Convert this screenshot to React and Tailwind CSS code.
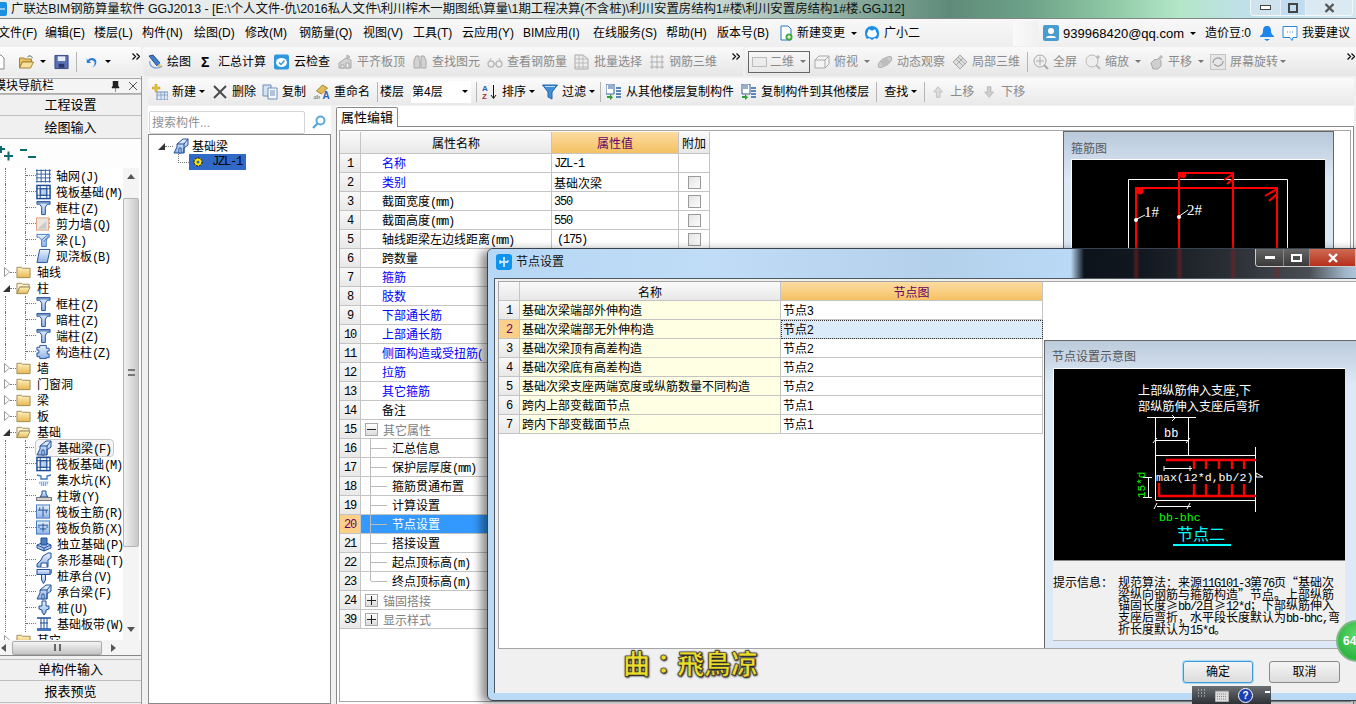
import React from 'react';

const S = ({ c = '', children, v = '0 0 16 16' }) => (
  <svg viewBox={v} className={`w-4 h-4 shrink-0 block ${c}`}>{children}</svg>
);
const Mono = ({ children, c = '' }) => (
  <span className={`font-['Liberation_Mono','Noto_Sans_CJK_SC',monospace] text-[12px] tracking-[-1.2px] ${c}`}>{children}</span>
);
const Cr = ({ c = '', g }) => (
  <span className={`w-0 h-0 shrink-0 border-x-[3px] border-x-transparent border-t-[3px] ${g ? 'border-t-[#777]' : 'border-t-black'} ${c}`} />
);
const Sep = ({ c = '' }) => <span className={`w-px h-[20px] bg-[#b5b5b5] shrink-0 ${c}`} />;
const Tb = ({ ic, t, c = '', g }) => (
  <div className={`flex items-center shrink-0 ${c} ${g ? 'text-[#8a8a8a]' : 'text-black'}`}>
    {ic}
    <span className="ml-1">{t}</span>
  </div>
);
const Chev = ({ c = '' }) => (
  <svg viewBox="0 0 8 7" className={`w-2 h-[7px] shrink-0 ${c}`}>
    <path d="M0.5 0.5l3 3-3 3M4.5 0.5l3 3-3 3" fill="none" stroke="#111" strokeWidth="1.3" />
  </svg>
);

/* toolbar icons */
const INew = () => <S><path d="M3 1h7l3 3v11H3z" fill="#fff" stroke="#888" /></S>;
const IOpen = () => <S c="w-[17px]"><path d="M1 4h5l1 1h6v3H4L1 14z" fill="#e9c060" stroke="#a5813a" /><path d="M4 8h11l-3 6H1z" fill="#f7e19b" stroke="#a5813a" /><path d="M9 3c2-2 4-1 5 1" fill="none" stroke="#3c7a3c" /></S>;
const ISave = () => <S c="w-[15px]"><path d="M1 1h14v14H1z" fill="#5a6fb5" stroke="#34467f" /><path d="M4 2h8v5H4z" fill="#e7ecf8" /><path d="M5 10h6v4H5z" fill="#2a3768" /></S>;
const IUndo = () => <S c="w-[14px]"><path d="M3 6c3-4 10-3 10 2 0 3-2 5-4 6 1-2 2-3 2-5 0-3-4-4-6-2l2 2H2V3z" fill="#2e7dd6" /></S>;
const IDraw = () => <S><path d="M2 2l4-1 7 8-3 3z" fill="#3f7fc8" stroke="#27508a" /><path d="M3 7c-1 3 1 6 5 7 3 0 6-1 7-2" fill="none" stroke="#7aa7d8" strokeWidth="1.4" /><path d="M10 12l3-3 1 4z" fill="#e6c25a" /></S>;
const ICloud = () => <S c="w-[17px]"><rect x="0.5" y="0.5" width="15" height="15" rx="2" fill="#2f97de" /><ellipse cx="8" cy="8.5" rx="5.5" ry="4.5" fill="#fff" /><path d="M5.5 8.5l2 2 3.5-4" fill="none" stroke="#2f97de" strokeWidth="1.4" /></S>;
const G = ({ d, f = '#d3d3d3', s = '#a9a9a9' }) => <path d={d} fill={f} stroke={s} />;
const IAlign = () => <S><G d="M2 9l7-5 5 2v8H2z" /><G d="M4 11h3v3H4zM9 9h3v5H9z" f="#eee" /><G d="M10 1l3 2-3 2z" /></S>;
const IBino = () => <S><G d="M2 6l2-4h3v4l1 1v7H2zM9 2h3l2 4v8H9V7z" /></S>;
const IGlass = () => <S><circle cx="4" cy="10" r="3" fill="none" stroke="#bbb" strokeWidth="1.4" /><circle cx="12" cy="10" r="3" fill="none" stroke="#bbb" strokeWidth="1.4" /><path d="M7 10h2M2 8l2-4M14 8l-2-4" stroke="#bbb" fill="none" /></S>;
const IBatch = () => <S><G d="M1 1h8l5 4v10H1z" f="#eee" /><path d="M1 5h13M1 9h13M1 13h13M5 1v14M9 1v14" stroke="#bbb" /></S>;
const IRebar3 = () => <S><path d="M1 3h14M1 8h14M1 13h14M3 1v14M8 1v14M13 1v14" stroke="#b0b0b0" fill="none" /></S>;
const IFront = () => <S><G d="M1 6l4-4h10v8l-4 4H1z" f="#f4f4f4" /><path d="M1 6h10v8M11 6l4-4" stroke="#a9a9a9" fill="none" /></S>;
const IOrbit = () => <S><ellipse cx="8" cy="8" rx="8" ry="3.5" transform="rotate(-35 8 8)" fill="#cfcfcf" stroke="#b0b0b0" /><circle cx="8" cy="8" r="4" fill="#bdbdbd" /></S>;
const ICube = () => <S><G d="M8 1l7 7-7 7-7-7z" f="#dedede" /><path d="M4 5l7 7M6 3l7 7M4 11l7-7" stroke="#aaa" fill="none" /></S>;
const IFull = () => <S><circle cx="7" cy="7" r="6" fill="#eee" stroke="#aaa" /><path d="M7 3v8M3 7h8" stroke="#aaa" /><path d="M11 11l4 4" stroke="#aaa" strokeWidth="2" /></S>;
const IZoom = () => <S><circle cx="7" cy="7" r="6" fill="#eee" stroke="#bbb" /><path d="M11 11l4 4" stroke="#bbb" strokeWidth="2" /><path d="M13 1v4M11 3h4" stroke="#aaa" /></S>;
const IHand = () => <S><G d="M3 9l4-4 1 1 3-2 2 3v5l-3 3H5z" f="#cfcfcf" /><path d="M13 1v4M11 3h4" stroke="#aaa" /></S>;
const IRot = () => <S><rect x="0.5" y="0.5" width="15" height="15" fill="#e6e6e6" stroke="#c4c4c4" /><path d="M3 9a5 5 0 0 1 9-3M13 7a5 5 0 0 1-9 3" fill="none" stroke="#9b9b9b" strokeWidth="1.2" /></S>;
const INewItem = () => <S><path d="M0 3h3V0h2v3h3v2H5v3H3V5H0z" fill="#e8c23a" stroke="#a98a1a" strokeWidth="0.4" /><rect x="5" y="8" width="11" height="8" fill="#dbe6f6" stroke="#7b93b8" /><path d="M5 11h11M9 8v8M12.5 8v8" stroke="#7b93b8" strokeWidth="0.7" /></S>;
const IX = () => <S><path d="M2 2l12 12M14 2L2 14" stroke="#4a4a4a" strokeWidth="2" /></S>;
const ICopy = () => <S><path d="M1 1h8v11H1z" fill="#d4e2f4" stroke="#6f8db5" /><path d="M6 4h9v11H6z" fill="#f4f8fd" stroke="#6f8db5" /><path d="M8 7h5M8 9h5M8 11h5" stroke="#6f8db5" /></S>;
const IRename = () => <S c="w-[17px]"><path d="M3 7l6-6 5 3-6 6z" fill="#e2bd55" stroke="#a2832f" /><text x="0" y="15" fontSize="7" fill="#555" fontFamily="Liberation Serif">ab</text><text x="9" y="15" fontSize="10" fontWeight="bold" fill="#2a62b5" fontFamily="Liberation Sans">A</text></S>;
const ISort = () => <S><text x="0" y="7" fontSize="8" fontWeight="bold" fill="#2a62b5" fontFamily="Liberation Sans">A</text><text x="0" y="15" fontSize="8" fontWeight="bold" fill="#a03333" fontFamily="Liberation Sans">Z</text><path d="M11.5 1v13M9 11l2.5 3.5L14 11" stroke="#111" fill="none" /></S>;
const IFunnel = () => <S><path d="M0.5 1h15L10 8v7l-4-2V8z" fill="#3f8ed8" stroke="#2a62a8" /><path d="M3 2.5h10" stroke="#bcdcf6" /></S>;
const ICopyF = ({ flip }) => <S><path d={flip ? 'M1 0h8v10H1z' : 'M0 0h8v10H0z'} fill="#fff" stroke="#335f96" /><path d="M2 2h5M2 4h5" stroke="#335f96" /><path d="M10 6h5v2h-5zM10 9h5v2h-5zM10 12h5v2h-5zM10 3h5v2h-5z" fill="#5b87b8" /><path d="M1 12h3v-2l3 3.5L4 16v-2H1z" fill="#2f9b3a" /></S>;
const IUp = () => <S c="w-[14px]"><path d="M7 2l5 6H9v6H5V8H2z" fill="#dcdcdc" stroke="#bdbdbd" /></S>;
const IDown = () => <S c="w-[14px]"><path d="M7 14l5-6H9V2H5v6H2z" fill="#cfcfcf" stroke="#b5b5b5" /></S>;

/* tree icons */
const Col = () => <S c="w-[15px]"><path d="M1 1h14v3h-3l-2 3v8H6V7L4 4H1z" fill="url(#gb)" stroke="#1f4f9a" /><path d="M1 2.5h14" stroke="#1f4f9a" /></S>;
const IGridI = () => <S c="w-[15px]"><path d="M1 1v14M5.5 1v14M10 1v14M14.5 1v14M0 2h16M0 6h16M0 10h16M0 14h16" stroke="#2a5ba8" fill="none" /></S>;
const IRaft = () => <S c="w-[15px]"><rect x="1" y="1" width="14" height="14" fill="#fff" stroke="#1f4f9a" strokeWidth="1.6" /><rect x="4.5" y="4.5" width="7" height="7" fill="#b9cfee" stroke="#1f4f9a" /><path d="M1 4.5h14M1 11.5h14M4.5 1v14M11.5 1v14" stroke="#1f4f9a" /></S>;
const IWall = () => <S c="w-[15px]"><rect x="0.5" y="1.5" width="13" height="13" fill="#e9e5e2" stroke="#e0a07d" /><path d="M3 12l8-7v8H3z" fill="#c9c9c9" /><path d="M14.5 2v12" stroke="#e18b3e" strokeDasharray="2 2" /></S>;
const IBeamI = () => <S c="w-[15px]"><path d="M1 2h13v3l-3 3v7H6V8L3 5H1z" fill="url(#gb)" stroke="#3f78c0" /><path d="M6 8l7-6M8 10l6-7" stroke="#3f78c0" /></S>;
const ISlab = () => <S c="w-[15px]"><path d="M4 1h11l-3 14H1z" fill="url(#gb)" stroke="#1f4f9a" /></S>;
const IPuz = () => <S c="w-[15px]"><path d="M4 1h7v3h3v3h-2v3h2v4h-3v1H4v-2H1V9h2V6H1V3h3z" fill="url(#gb)" stroke="#1f4f9a" /></S>;
const IFound = () => <S c="w-[16px]"><path d="M1 15l3-6V6l6-5h5v6l-4 3v5z" fill="url(#gb)" stroke="#1f4f9a" /><path d="M4 6h7v9M11 6l4-5" stroke="#1f4f9a" fill="none" /><path d="M6 15v-5h2v5z" fill="#fff" stroke="#1f4f9a" /></S>;
const ISump = () => <S c="w-[16px]"><path d="M1 3l4 1v3h6V4l4-1" fill="none" stroke="#3f78c0" strokeWidth="1.4" /><path d="M3 9h10l-2 5H5z" fill="#cfe0f5" /><path d="M3 11h10M5 13h6" stroke="#3f78c0" strokeDasharray="1 1" /></S>;
const IPier = () => <S c="w-[16px]"><path d="M6 3h4v3l2 3H4l2-3z" fill="url(#gb)" stroke="#1f4f9a" /><rect x="0.5" y="9.5" width="15" height="3" fill="#d2d2d2" stroke="#777" /></S>;
const IRRebar = ({ x }) => <S c="w-[15px]"><rect x="0.5" y="0.5" width="14" height="14" fill="url(#gb)" stroke="#3f78c0" /><path d={x ? 'M2 5h11M7.5 3v9M4 9h7M2 7h2M11 7h2' : 'M2 6h11M7.5 2v11M4 3v3M11 6v3'} stroke="#1f4f9a" fill="none" /></S>;
const IIso = () => <S c="w-[16px]"><path d="M1 9l7-3 7 3v3l-7 3-7-3z" fill="url(#gb)" stroke="#1f4f9a" /><path d="M5 2h6v7H5z" fill="#4f7ec0" stroke="#1f4f9a" /><path d="M1 9l7 3 7-3M8 12v3" stroke="#1f4f9a" fill="none" /></S>;
const IStrip = () => <S c="w-[16px]"><path d="M1 15v-3l4-4 2-4 5-3h3v5l-3 2v7z" fill="url(#gb)" stroke="#1f4f9a" /><path d="M5 15v-4h6v4" fill="#fff" stroke="#1f4f9a" /></S>;
const IPile = () => <S c="w-[16px]"><rect x="1" y="1.5" width="13" height="5" fill="url(#gb)" stroke="#1f4f9a" /><path d="M14 2l2-1v4l-2 2" fill="#4f7ec0" /><path d="M5.5 6.5h4V12L7.5 15.5 5.5 12z" fill="url(#gb)" stroke="#1f4f9a" /></S>;
const IPile2 = () => <S c="w-[16px]"><path d="M6 1h4v5h3v3l-3 1v2l-2 3-2-3v-2L3 9V6h3z" fill="url(#gb)" stroke="#1f4f9a" /></S>;
const IBand = () => <S c="w-[16px]"><path d="M1 2h14M1 13h14" stroke="#1f4f9a" strokeWidth="1.5" /><path d="M5 2v11M8 2v11M11 2v11M4 7h8" stroke="#1f4f9a" /><rect x="1" y="13" width="14" height="2" fill="#3f78c0" /></S>;
const Folder = () => <S c="w-[15px]"><path d="M1 3h5l1 1h8v10H1z" fill="url(#gf)" stroke="#9c8a55" /></S>;
const FolderO = () => <S c="w-[15px]"><path d="M1 3h5l1 1h7v3H4l-3 7z" fill="#fbf1cf" stroke="#9c8a55" /><path d="M4 7h11l-3 7H1z" fill="url(#gf)" stroke="#9c8a55" /></S>;
const Exp = ({ open }) =>
  open ? <svg viewBox="0 0 7 7" className="w-[7px] h-[7px] shrink-0"><path d="M7 0v7H0z" fill="#333" /></svg>
       : <svg viewBox="0 0 6 10" className="w-[6px] h-[10px] shrink-0"><path d="M0.5 0.5l5 4.5-5 4.5z" fill="#fff" stroke="#999" /></svg>;

const NavBtn = ({ t, c = '' }) => (
  <div className={`flex items-center justify-center shrink-0 bg-[#f0f0f0] border-y border-[#bdbdbd] text-[13px] ${c}`}>{t}</div>
);

const T0 = ({ t, open }) => (
  <div className="flex items-center h-4 shrink-0">
    <span className="w-[3px]" />
    <span className="w-[7px] flex justify-center"><Exp open={open} /></span>
    <span className="w-[6px] h-0 border-t border-dotted border-[#777]" />
    {open ? <FolderO /> : <Folder />}
    <span className="ml-[6px] mt-[2px] text-[12px] leading-none">{t}</span>
  </div>
);
const T1 = ({ ic, t, k, hl }) => (
  <div className="flex items-center h-4 shrink-0">
    <span className="w-[5px]" />
    <span className="w-[20px] h-full border-l border-dotted border-[#777]" />
    <span className="w-[11px] h-full border-l border-dotted border-[#777]">
      <span className="block w-full mt-[7px] border-t border-dotted border-[#777]" />
    </span>
    <div className={`flex items-center h-4 ${hl ? 'bg-[#f5f5f5] outline outline-[#c9c9c9] rounded-[3px] pr-[2px]' : ''}`}>
      {ic}
      <span className="ml-[5px] mt-[2px] text-[12px] leading-none whitespace-nowrap">{t}<Mono>{k}</Mono></span>
    </div>
  </div>
);

const LeftPanel = () => (
  <div className="w-[142px] shrink-0 flex flex-col border-r border-[#9a9a9a] overflow-hidden">
    <div className="h-[16px] mt-[2px] shrink-0 flex items-center bg-[#f4f4f4] border border-[#aaa] rounded-[2px] -ml-[7px] w-[149px]">
      <span className="text-[12px] leading-none">模块导航栏</span>
      <svg viewBox="0 0 9 11" className="w-[9px] h-[11px] ml-[57px]"><path d="M2 0h5v5l1 1v1H1V6l1-1zM4.5 7v4" fill="#222" stroke="#222" strokeWidth="0.5" /></svg>
      <svg viewBox="0 0 8 8" className="w-2 h-2 ml-[9px]"><path d="M0 0l8 8M8 0L0 8" stroke="#555" /></svg>
    </div>
    <NavBtn t="工程设置" c="h-[22px]" />
    <NavBtn t="绘图输入" c="h-[23px] border-t-0 pt-[2px]" />
    <div className="h-[29px] shrink-0 bg-[#fdfdfd] flex items-center">
      <svg viewBox="0 0 36 16" className="w-9 h-4"><path d="M-3 3h8M1 -1v8M4 10h9M8.500 5.500v9M20 4h7M28 11h8" stroke="#0d6a70" strokeWidth="2" fill="none" /></svg>
    </div>
    <div className="h-[472px] shrink-0 flex bg-white overflow-hidden">
      <div className="w-[123px] shrink-0 flex flex-col">
        <T1 ic={<IGridI />} t="轴网" k="(J)" />
        <T1 ic={<IRaft />} t="筏板基础" k="(M)" />
        <T1 ic={<Col />} t="框柱" k="(Z)" />
        <T1 ic={<IWall />} t="剪力墙" k="(Q)" />
        <T1 ic={<IBeamI />} t="梁" k="(L)" />
        <T1 ic={<ISlab />} t="现浇板" k="(B)" />
        <T0 t="轴线" />
        <T0 t="柱" open />
        <T1 ic={<Col />} t="框柱" k="(Z)" />
        <T1 ic={<Col />} t="暗柱" k="(Z)" />
        <T1 ic={<Col />} t="端柱" k="(Z)" />
        <T1 ic={<IPuz />} t="构造柱" k="(Z)" />
        <T0 t="墙" />
        <T0 t="门窗洞" />
        <T0 t="梁" />
        <T0 t="板" />
        <T0 t="基础" open />
        <T1 ic={<IFound />} t="基础梁" k="(F)" hl />
        <T1 ic={<IRaft />} t="筏板基础" k="(M)" />
        <T1 ic={<ISump />} t="集水坑" k="(K)" />
        <T1 ic={<IPier />} t="柱墩" k="(Y)" />
        <T1 ic={<IRRebar />} t="筏板主筋" k="(R)" />
        <T1 ic={<IRRebar x />} t="筏板负筋" k="(X)" />
        <T1 ic={<IIso />} t="独立基础" k="(P)" />
        <T1 ic={<IStrip />} t="条形基础" k="(T)" />
        <T1 ic={<IPile />} t="桩承台" k="(V)" />
        <T1 ic={<IFound />} t="承台梁" k="(F)" />
        <T1 ic={<IPile2 />} t="桩" k="(U)" />
        <T1 ic={<IBand />} t="基础板带" k="(W)" />
        <T0 t="其它" />
      </div>
      <div className="w-[16px] shrink-0 flex flex-col items-center bg-[#f4f4f4]">
        <svg viewBox="0 0 8 5" className="w-2 h-[5px] mt-[6px]"><path d="M4 0l4 5H0z" fill="#555" /></svg>
        <div className="w-full h-[349px] mt-[19px] flex items-center justify-center rounded-[2px] border border-[#b5b5b5] bg-[linear-gradient(90deg,#f2f2f2,#c9c9c9)]">
          <div className="w-[7px] h-[7px] border-y-2 border-double border-[#777]" />
        </div>
        <svg viewBox="0 0 8 5" className="w-2 h-[5px] mt-[80px]"><path d="M4 5l4-5H0z" fill="#555" /></svg>
      </div>
    </div>
    <div className="h-[16px] shrink-0 flex items-center bg-[#f4f4f4] border-b border-[#888]">
      <svg viewBox="0 0 5 8" className="w-[5px] h-2 ml-[1px]"><path d="M0 4l5-4v8z" fill="#555" /></svg>
      <div className="w-[90px] h-[14px] ml-[6px] flex items-center justify-center rounded-[2px] border border-[#aaa] bg-[linear-gradient(#f4f4f4,#c4c4c4)]">
        <div className="w-[7px] h-[7px] border-x-2 border-double border-[#666]" />
      </div>
      <svg viewBox="0 0 5 8" className="w-[5px] h-2 ml-[9px]"><path d="M5 4L0 0v8z" fill="#555" /></svg>
    </div>
    <div className="h-[3px] shrink-0" />
    <NavBtn t="单构件输入" c="h-[22px]" />
    <NavBtn t="报表预览" c="h-[22px] border-t-0" />
  </div>
);

const MiddlePanel = () => (
  <div className="w-[183px] shrink-0 flex flex-col">
    <div className="h-[28px] shrink-0 flex items-start pt-[5px] bg-white pl-[1px]">
      <div className="w-[156px] h-[23px] border border-[#d4d4d4] rounded-[2px] flex items-center pl-[2px] text-[#8f8f8f] text-[12px]">搜索构件...</div>
      <svg viewBox="0 0 14 14" className="w-[14px] h-[14px] ml-[7px] mt-[4px]"><circle cx="8.5" cy="5.5" r="4" fill="none" stroke="#5aa9de" strokeWidth="2" /><path d="M5.500 8.500L1 13" stroke="#5aa9de" strokeWidth="2.4" /></svg>
    </div>
    <div className="flex-1 bg-white border border-[#8a8a8a] flex flex-col pt-[3px]">
      <div className="flex items-center h-[16px] pl-[9px]">
        <Exp open />
        <span className="w-2 h-0 border-t border-dotted border-[#777]" />
        <IFound />
        <span className="ml-[3px] mt-[2px] text-[12px] leading-none">基础梁</span>
      </div>
      <div className="flex items-center h-[16px] pl-[29px]">
        <span className="w-[11px] h-[9px] self-start border-l border-b border-dotted border-[#777]" />
        <div className="w-[57px] h-[16px] bg-[#316ac5] flex items-center pl-[3px]">
          <svg viewBox="0 0 12 12" className="w-3 h-3 shrink-0"><circle cx="6" cy="6" r="4" fill="#ffe600" stroke="#000" strokeDasharray="2 1" /><circle cx="6" cy="6" r="1.5" fill="#316ac5" /></svg>
          <Mono c="ml-[8px] text-black">JZL-1</Mono>
        </div>
      </div>
    </div>
  </div>
);

const rows = [
  { n: 1, t: '名称', k: 'b', v: 'JZL-1', mono: true },
  { n: 2, t: '类别', k: 'b', v: '基础次梁', cb: true },
  { n: 3, t: '截面宽度', u: '(mm)', v: '350', cb: true, num: true },
  { n: 4, t: '截面高度', u: '(mm)', v: '550', cb: true, num: true },
  { n: 5, t: '轴线距梁左边线距离', u: '(mm)', v: '(175)', cb: true, par: true },
  { n: 6, t: '跨数量', cb: true },
  { n: 7, t: '箍筋', k: 'b', cb: true },
  { n: 8, t: '肢数', k: 'b', cb: true },
  { n: 9, t: '下部通长筋', k: 'b', cb: true },
  { n: 10, t: '上部通长筋', k: 'b', cb: true },
  { n: 11, t: '侧面构造或受扭筋(', k: 'b', cb: true },
  { n: 12, t: '拉筋', k: 'b', cb: true },
  { n: 13, t: '其它箍筋', k: 'b', cb: true },
  { n: 14, t: '备注', cb: true },
  { n: 15, t: '其它属性', g: '-' },
  { n: 16, t: '汇总信息', ch: 1 },
  { n: 17, t: '保护层厚度', u: '(mm)', ch: 1 },
  { n: 18, t: '箍筋贯通布置', ch: 1 },
  { n: 19, t: '计算设置', ch: 1 },
  { n: 20, t: '节点设置', ch: 1, sel: true },
  { n: 21, t: '搭接设置', ch: 1 },
  { n: 22, t: '起点顶标高', u: '(m)', ch: 1 },
  { n: 23, t: '终点顶标高', u: '(m)', ch: 2 },
  { n: 24, t: '锚固搭接', g: '+' },
  { n: 39, t: '显示样式', g: '+' },
];
const cell = 'h-full flex items-center border-r border-b border-[#c4c4c4] shrink-0';
const num = `${cell} w-[21px] justify-center`;
const numBg = 'bg-[linear-gradient(#f8f8f8,#e8e8e8)]';
const hdrBg = 'bg-[linear-gradient(#fafafa,#e8e8e8)]';
const hotBg = 'bg-[linear-gradient(#fcdca2,#f4c163)] text-[#660066]';

const GBox = ({ s }) => (
  <span className="w-[13px] h-[13px] ml-[4px] shrink-0 border border-[#aaa] bg-[linear-gradient(#ffffff,#dcdcdc)] flex items-center justify-center">
    <svg viewBox="0 0 9 9" className="w-[9px] h-[9px]"><path d={s === '+' ? 'M0 4.5h9M4.5 0v9' : 'M0 4.5h9'} stroke="#222" /></svg>
  </span>
);
const Row = ({ r }) => (
  <div className="flex h-[19px] shrink-0 text-[12px] leading-none">
    <div className={`${num} ${r.sel ? 'bg-[#fdd08a] text-[#660066]' : numBg}`}><Mono c="mt-[2px]">{r.n}</Mono></div>
    <div className={`${cell} w-[191px] overflow-hidden whitespace-nowrap ${r.sel ? 'bg-[#3399ff] text-white' : ''} ${r.k === 'b' ? 'text-[#0000ff]' : ''} ${r.g ? 'text-[#808080]' : ''}`}>
      {r.g && <GBox s={r.g} />}
      {r.g && <span className="ml-[5px] mt-[3px]">{r.t}</span>}
      {r.ch && (
        <>
          <span className="w-[9px]" />
          <span className={`w-[17px] shrink-0 ${r.ch === 2 ? 'h-1/2 self-start' : 'h-full'} border-l border-[#bbb]`}>
            <span className="block mt-[9px] border-t border-[#bbb]" />
          </span>
          <span className="ml-[5px] mt-[3px]">{r.t}<Mono>{r.u}</Mono></span>
        </>
      )}
      {!r.g && !r.ch && <span className="ml-[21px] mt-[3px]">{r.t}<Mono>{r.u}</Mono></span>}
    </div>
    <div className={`${cell} w-[127px] ${r.sel ? 'bg-[#3399ff]' : ''}`}>
      {r.v && (r.mono || r.num || r.par ? <Mono c={r.par ? 'ml-[5px] mt-[2px]' : 'ml-[2px] mt-[2px]'}>{r.v}</Mono> : <span className="ml-[2px] mt-[3px]">{r.v}</span>)}
    </div>
    <div className={`${cell} w-[31px] justify-center`}>
      {r.cb && <span className="w-[13px] h-[13px] border border-[#9a9a9a] bg-[linear-gradient(135deg,#e4e4e4,#fbfbfb)]" />}
    </div>
  </div>
);

const StirrupCanvas = () => (
  <svg viewBox="0 0 253 240" className="w-[253px] h-[240px] block">
    <rect width="253" height="240" fill="#000" />
    <path d="M56.5 240V19.5H215.5V240" fill="none" stroke="#fff" />
    <path d="M64 240V28H205V240M107 240V13H161V240" fill="none" stroke="#f00" strokeWidth="2" />
    <circle cx="68" cy="31" r="3.4" fill="#f00" />
    <circle cx="111" cy="15" r="3.2" fill="#f00" />
    <path d="M205 29l-12 7M205 34l-8 7M161 14l-9 6M161 19l-6 5" stroke="#f00" strokeWidth="2" fill="none" />
    <path d="M63 60L73 55M106 57L116 50" stroke="#fff" />
    <circle cx="64" cy="60" r="2" fill="#fff" />
    <circle cx="107" cy="57" r="2" fill="#fff" />
    <text x="72" y="57" fill="#fff" fontSize="15" fontFamily="Liberation Serif">1#</text>
    <text x="115" y="55" fill="#fff" fontSize="15" fontFamily="Liberation Serif">2#</text>
  </svg>
);

const NodeDiagram = () => (
  <svg viewBox="0 0 291 191" className="w-[291px] h-[191px] block">
    <rect width="291" height="191" fill="#000" />
    <g fontFamily="Noto Sans CJK SC" fontSize="12.2" fill="#fff">
      <text x="84" y="26">上部纵筋伸入支座,下</text>
      <text x="84" y="42">部纵筋伸入支座后弯折</text>
    </g>
    <g stroke="#fff" fill="none">
      <path d="M93 48.5h49M101.5 48.5V131M134.5 48.5V86.5M101.5 71.5h33M101.5 86.5h100M101.5 131.5h100M201.5 78v65" />
      <path d="M118 46l3 3-3 3M99 74l4-5M132 74l4-5M110 99.5h28M110 97v5M136 97v5" />
      <path d="M89 108.5h9M89 128.5h9M94.5 108v21M103 137.500h34M103 134l-3 6M136 134l-3 6" />
      <path d="M202 104l7 4h-7z" />
    </g>
    <path d="M112 91h90M105 127h97M105 114v14M140 91v9M152 91v9M165 91v9M178 91v9M190 91v9M140 115v12M152 115v12M165 115v12M178 115v12M190 115v12" stroke="#f00" strokeWidth="2.4" fill="none" />
    <text x="102" y="112" fill="#fff" fontSize="11.6" fontFamily="Liberation Mono">max(12*d,bb/2)</text>
    <text x="110" y="68" fill="#fff" fontSize="12" fontFamily="Liberation Mono">bb</text>
    <text transform="translate(91 129) rotate(-90)" fill="#0f0" fontSize="11" fontFamily="Liberation Mono">15*d</text>
    <text x="105" y="152" fill="#0f0" fontSize="11.6" fontFamily="Liberation Mono">bb-bhc</text>
    <text x="123" y="171" fill="#0ff" fontSize="16" fontFamily="Noto Sans CJK SC">节点二</text>
    <rect x="119" y="175" width="58" height="2" fill="#0ff" />
  </svg>
);

const dRows = [
  ['1', '基础次梁端部外伸构造', '节点3'],
  ['2', '基础次梁端部无外伸构造', '节点2', true],
  ['3', '基础次梁顶有高差构造', '节点2'],
  ['4', '基础次梁底有高差构造', '节点2'],
  ['5', '基础次梁支座两端宽度或纵筋数量不同构造', '节点2'],
  ['6', '跨内上部变截面节点', '节点1'],
  ['7', '跨内下部变截面节点', '节点1'],
];

const InfoLine = ({ children }) => <span className="block h-[11.7px] leading-[11.7px]">{children}</span>;

const Dialog = () => (
  <div className="absolute left-[487px] top-[248px] w-[885px] h-[453px] flex flex-col border border-[#39434f] rounded-tl-[6px] rounded-bl-[6px] bg-[#bad9f5] shadow-[-6px_2px_10px_rgba(0,0,0,0.45)] overflow-hidden">
    <div className="h-[29px] shrink-0 flex items-center pb-[4px] bg-[linear-gradient(90deg,transparent_73%,rgba(140,30,30,0.55)_73.4%,transparent_73.8%,transparent_77.9%,rgba(140,30,30,0.55)_78.3%,transparent_78.7%,transparent_84%,rgba(140,30,30,0.5)_84.4%,transparent_84.8%,transparent_89%,rgba(140,30,30,0.5)_89.4%,transparent_89.800%),linear-gradient(90deg,#b6d7f5_0%,#c0dcf6_25%,#b4d0ea_50%,#b9d9f6_66%,#0d131b_67.5%,#12181f_74%,#2a2f35_84%,#4a4e53_93%,#9fb4c8_97%,#c4dcf2_100%)]">
      <svg viewBox="0 0 16 16" className="w-[16px] h-[16px] ml-[8px]"><rect width="16" height="16" rx="3" fill="#0f93ee" /><path d="M4 8h8M8 3v4M8 9v4" stroke="#fff" strokeWidth="1.5" /><path d="M4 6v4M12 6v2" stroke="#fff" /></svg>
      <span className="ml-[4px] text-[12px] leading-none text-[#111]">节点设置</span>
      <div className="ml-auto mr-[16px] self-start h-[18px] flex border-b border-l border-[#ccc] rounded-bl-[4px] overflow-hidden">
        <div className="w-[28px] flex items-center justify-center border-r border-[#888] bg-[linear-gradient(#666,#3a3a3a)]"><span className="w-[10px] h-[3px] bg-white" /></div>
        <div className="w-[26px] flex items-center justify-center border-r border-[#888] bg-[linear-gradient(#666,#3a3a3a)]"><span className="w-[11px] h-[8px] border-2 border-white" /></div>
        <div className="w-[45px] flex items-center justify-center bg-[linear-gradient(#cf6a55,#b5301a)]">
          <svg viewBox="0 0 10 10" className="w-[10px] h-[10px]"><path d="M1 1l8 8M9 1l-8 8" stroke="#fff" strokeWidth="2.4" /></svg>
        </div>
      </div>
    </div>
    <div className="flex-1 ml-[6px] border-l border-t border-[#4e5862] bg-[#f0f0f0] flex flex-col">
      <div className="h-[368px] mt-[2px] ml-[3px] border-l border-t border-b border-[#a5a5a5] bg-white flex">
        <div className="w-[544px] shrink-0 flex flex-col">
          <div className="flex h-[19px] shrink-0 text-[12px] leading-none">
            <div className={`${num} ${numBg}`} />
            <div className={`${cell} w-[261px] justify-center pt-[3px] ${hdrBg}`}>名称</div>
            <div className={`${cell} w-[262px] justify-center pt-[3px] ${hotBg}`}>节点图</div>
          </div>
          {dRows.map(([n, a, b, s]) => (
            <div key={n} className="flex h-[19px] shrink-0 text-[12px] leading-none">
              <div className={`${num} ${s ? 'bg-[#fdd08a] text-[#660066]' : numBg}`}><Mono c="mt-[1px]">{n}</Mono></div>
              <div className={`${cell} w-[261px] bg-[#ffffe3] pl-[2px] pt-[2px]`}>{a}</div>
              <div className={`${cell} w-[262px] pl-[2px] pt-[2px] ${s ? 'bg-[#dcebf9] outline outline-dotted outline-[#333] -outline-offset-1' : ''}`}>{b}</div>
            </div>
          ))}
        </div>
        <div className="ml-[1px] mt-[58px] w-[320px] h-[308px] border-t border-l border-[#666] bg-[linear-gradient(#bccbdb,#dde9f6_14%,#dde9f6)] flex flex-col">
          <div className="h-[27px] shrink-0 flex items-center pl-[7px] pt-[4px] text-[12px] leading-none text-[#555]">节点设置示意图</div>
          <div className="ml-[8px] w-[292px] h-[193px] border border-white border-b-[#888] border-r-0 shrink-0"><NodeDiagram /></div>
          <div className="ml-[8px] w-[292px] h-[80px] bg-[#f0f0f0] border-b border-[#bbb] flex text-[12px] pt-[15px] font-['Noto_Sans_CJK_SC',sans-serif]">
            <span className="w-[65px] shrink-0 leading-[11.7px]">提示信息：</span>
            <div className="flex flex-col whitespace-nowrap">
              <InfoLine>规范算法：来源<Mono>11G101-3</Mono>第<Mono>76</Mono>页“基础次</InfoLine>
              <InfoLine>梁纵向钢筋与箍筋构造”节点。上部纵筋</InfoLine>
              <InfoLine>锚固长度≥<Mono>bb/2</Mono>且≥<Mono>12*d</Mono>；下部纵筋伸入</InfoLine>
              <InfoLine>支座后弯折，水平段长度默认为<Mono>bb-bhc,</Mono>弯</InfoLine>
              <InfoLine>折长度默认为<Mono>15*d</Mono>。</InfoLine>
            </div>
          </div>
        </div>
      </div>
      <div className="flex mt-[12px] ml-[688px]">
        <div className="w-[70px] h-[22px] rounded-[3px] border border-[#3c9bd6] shadow-[0_0_0_1px_#a9dcf5] bg-[linear-gradient(#f5f5f5,#dcdcdc)] flex items-center justify-center text-[12px]">确定</div>
        <div className="w-[71px] h-[22px] ml-[16px] rounded-[3px] border border-[#8a8a8a] bg-[linear-gradient(#f5f5f5,#dcdcdc)] flex items-center justify-center text-[12px]">取消</div>
      </div>
    </div>
    <div className="h-[7px] shrink-0" />
  </div>
);

export default function App() {
  return (
    <div className="relative w-[1356px] h-[704px] overflow-hidden flex flex-col bg-[#f0f0f0] text-black text-[12px] font-['Liberation_Sans','Noto_Sans_CJK_SC',sans-serif]">
      <svg className="absolute w-0 h-0">
        <defs>
          <linearGradient id="gb" x1="0" y1="0" x2="0" y2="1"><stop offset="0" stopColor="#e9f1fc" /><stop offset="1" stopColor="#8fb2e6" /></linearGradient>
          <linearGradient id="gf" x1="0" y1="0" x2="0" y2="1"><stop offset="0" stopColor="#fff1bd" /><stop offset="1" stopColor="#e5b951" /></linearGradient>
        </defs>
      </svg>

      {/* title bar */}
      <div className="h-[19px] shrink-0 flex items-center border-b border-[#7e8886] bg-[linear-gradient(90deg,#e9ecec_0%,#e6eae9_35%,#cfdcd6_52%,#8fb0a2_62%,#5f8a7a_70%,#6ea388_76%,#8fc9a6_82%,#b4e6c8_87%,#bfe0ea_92%,#d4e8f2_100%)]">
        <svg viewBox="0 0 8 14" className="w-2 h-[14px] ml-0"><rect x="-8" width="15" height="14" rx="2" fill="#1d8fe0" /><path d="M0 7h5" stroke="#fff" /></svg>
        <span className="ml-[3px] text-[12.4px] leading-none whitespace-nowrap text-[#111]">广联达BIM钢筋算量软件 GGJ2013 - [E:\个人文件-仇\2016私人文件\利川榨木一期图纸\算量\1期工程决算(不含桩)\利川安置房结构1#楼\利川安置房结构1#楼.GGJ12]</span>
        <div className="ml-auto mr-[3px] self-start h-[16px] flex border border-t-0 border-[#f4f8f8] rounded-b-[4px] bg-[#ffffff30] overflow-hidden">
          <div className="w-[29px] flex items-center justify-center bg-[#cfe3ee]"><span className="w-[11px] h-[5px] border border-[#444] bg-white" /></div>
          <div className="w-[26px] flex items-center justify-center border-x border-[#eef] bg-[#c0dcf0]"><span className="w-[10px] h-[10px] border-2 border-[#444]" /></div>
          <div className="w-[46px] flex items-center justify-center bg-[#dbe9f2]">
            <svg viewBox="0 0 10 10" className="w-[11px] h-[10px]"><path d="M1 1l8 8M9 1l-8 8" stroke="#555" strokeWidth="2.4" /></svg>
          </div>
        </div>
      </div>

      {/* menu bar */}
      <div className="h-[28px] shrink-0 flex items-center whitespace-nowrap bg-[linear-gradient(#f8f8f8,#eeeeee)] -ml-[2px] w-[1358px]">
        <span className="w-[47px] shrink-0">文件(F)</span>
        <span className="w-[49px] shrink-0">编辑(E)</span>
        <span className="w-[48px] shrink-0">楼层(L)</span>
        <span className="w-[52px] shrink-0">构件(N)</span>
        <span className="w-[51px] shrink-0">绘图(D)</span>
        <span className="w-[54px] shrink-0">修改(M)</span>
        <span className="w-[64px] shrink-0">钢筋量(Q)</span>
        <span className="w-[50px] shrink-0">视图(V)</span>
        <span className="w-[49px] shrink-0">工具(T)</span>
        <span className="w-[61px] shrink-0">云应用(Y)</span>
        <span className="w-[70px] shrink-0">BIM应用(I)</span>
        <span className="w-[73px] shrink-0">在线服务(S)</span>
        <span className="w-[51px] shrink-0">帮助(H)</span>
        <span className="w-[61px] shrink-0">版本号(B)</span>
        <S><path d="M3 1h7l3 3v11H3z" fill="#fff" stroke="#2277c8" /><circle cx="11" cy="12" r="3.5" fill="#3da83f" /><path d="M9 12h4M11 10v4" stroke="#fff" /></S>
        <span className="ml-[3px]">新建变更</span>
        <Cr c="ml-[6px]" />
        <svg viewBox="0 0 16 16" className="w-4 h-4 ml-[7px]"><path d="M8 1c4 0 7 3 7 7s-1 5-2 6l-2-1-3 2-3-2-2 1C2 13 1 11 1 8c0-4 3-7 7-7z" fill="#1d8fe8" /><ellipse cx="8" cy="9" rx="5" ry="3.5" fill="#fff" /><circle cx="5.5" cy="6" r="1.4" fill="#fff" /><circle cx="10.5" cy="6" r="1.4" fill="#fff" /></svg>
        <span className="ml-1">广小二</span>
        <div className="ml-auto pr-[6px] flex items-center h-full">
          <span className="w-[25px] h-[25px] bg-[linear-gradient(90deg,#fafafa,#f0f0f0)]" />
          <svg viewBox="0 0 16 16" className="w-4 h-4 ml-[5px]"><rect width="16" height="16" rx="2" fill="#4a9bcf" /><circle cx="8" cy="6" r="3" fill="#fff" /><path d="M3 13c0-3 10-3 10 0z" fill="#fff" /></svg>
          <span className="ml-[4px] text-[13px] leading-none">939968420@qq.com</span>
          <Cr c="ml-[6px]" />
          <span className="ml-[9px]">造价豆:0</span>
          <svg viewBox="0 0 14 16" className="w-[14px] h-4 ml-[9px]"><path d="M7 1c3 0 4 2 4 5 0 2 1 4 3 5v1H0v-1c2-1 3-3 3-5 0-3 1-5 4-5z" fill="#1d86e8" /><path d="M4 14h6l-3 2z" fill="#1d86e8" /></svg>
          <svg viewBox="0 0 16 16" className="w-4 h-4 ml-[8px]"><path d="M1 1.5h14v11H11l-1 3-2-3H1z" fill="#fff" stroke="#2a8ad8" /><path d="M5 7h1M7.5 7h1M10 7h1" stroke="#2a8ad8" /></svg>
          <span className="ml-1">我要建议</span>
        </div>
      </div>

      {/* toolbar row */}
      <div className="h-[29px] shrink-0 flex items-center whitespace-nowrap">
        <div className="w-[141px] h-full shrink-0 flex items-center bg-[linear-gradient(#fdfdfd,#ebebeb)]">
          <span className="-ml-[9px]"><INew /></span>
          <span className="ml-[11px]"><IOpen /></span>
          <Cr c="ml-[5px]" />
          <span className="ml-[8px]"><ISave /></span>
          <Sep c="ml-[7px]" />
          <span className="ml-[8px]"><IUndo /></span>
          <Cr c="ml-[6px]" />
          <Chev c="ml-[21px] self-start mt-[6px]" />
        </div>
        <div className="w-[600px] ml-[2px] h-full shrink-0 flex items-center rounded-l-[3px] bg-[linear-gradient(#fafafa,#e6e6e6)]">
          <Tb c="ml-[4px]" ic={<IDraw />} t="绘图" />
          <span className="ml-[10px] w-[9px] font-bold text-[14px] leading-none">Σ</span>
          <span className="ml-[8px]">汇总计算</span>
          <Tb c="ml-[7px]" ic={<ICloud />} t="云检查" />
          <Tb c="ml-[7px]" g ic={<IAlign />} t="平齐板顶" />
          <Tb c="ml-[7px]" g ic={<IBino />} t="查找图元" />
          <Tb c="ml-[7px]" g ic={<IGlass />} t="查看钢筋量" />
          <Tb c="ml-[7px]" g ic={<IBatch />} t="批量选择" />
          <Tb c="ml-[7px]" g ic={<IRebar3 />} t="钢筋三维" />
          <Chev c="ml-[15px] self-start mt-[6px]" />
        </div>
        <div className="flex-1 ml-[2px] h-full flex items-center rounded-l-[3px] bg-[linear-gradient(#fafafa,#e6e6e6)] text-[#8a8a8a]">
          <div className="ml-[3px] w-[62px] h-[22px] border border-[#666] flex items-center shrink-0 pl-[3px]">
            <span className="w-[15px] h-[10px] border border-[#bbb] bg-[#ececec]" />
            <span className="ml-[3px]">二维</span>
            <Cr g c="ml-[6px]" />
          </div>
          <Tb c="ml-[4px]" g ic={<IFront />} t="俯视" />
          <Cr g c="ml-[6px]" />
          <Tb c="ml-[7px]" g ic={<IOrbit />} t="动态观察" />
          <Tb c="ml-[7px]" g ic={<ICube />} t="局部三维" />
          <Sep c="ml-[7px]" />
          <Tb c="ml-[5px]" g ic={<IFull />} t="全屏" />
          <Tb c="ml-[8px]" g ic={<IZoom />} t="缩放" />
          <Cr g c="ml-[6px]" />
          <Tb c="ml-[7px]" g ic={<IHand />} t="平移" />
          <Cr g c="ml-[6px]" />
          <Tb c="ml-[6px]" g ic={<IRot />} t="屏幕旋转" />
          <Cr g c="ml-[2px]" />
          <Chev c="ml-auto mr-[1px] self-start mt-[6px]" />
        </div>
      </div>

      {/* body */}
      <div className="flex-1 flex min-h-0">
        <LeftPanel />
        <div className="ml-[6px] w-[1206px] shrink-0 flex flex-col pt-[2px]">
          <div className="h-[27px] shrink-0 flex items-center rounded-[3px] bg-[linear-gradient(#fbfbfb,#e9e9e9)] whitespace-nowrap">
            <Tb c="ml-[4px]" ic={<INewItem />} t="新建" />
            <Cr c="ml-[3px]" />
            <Tb c="ml-[7px]" ic={<IX />} t="删除" />
            <Tb c="ml-[6px]" ic={<ICopy />} t="复制" />
            <Tb c="ml-[7px]" ic={<IRename />} t="重命名" />
            <Sep c="ml-[7px]" />
            <span className="ml-[2px]">楼层</span>
            <div className="ml-[7px] w-[60px] h-[22px] bg-white flex items-center pl-[1px] shrink-0">
              第4层
              <Cr c="ml-auto mr-[3px]" />
            </div>
            <Sep c="ml-[5px]" />
            <Tb c="ml-[5px]" ic={<ISort />} t="排序" />
            <Cr c="ml-[3px]" />
            <Tb c="ml-[7px]" ic={<IFunnel />} t="过滤" />
            <Cr c="ml-[3px]" />
            <Sep c="ml-[5px]" />
            <Tb c="ml-[5px]" ic={<ICopyF />} t="从其他楼层复制构件" />
            <Tb c="ml-[7px]" ic={<ICopyF flip />} t="复制构件到其他楼层" />
            <Sep c="ml-[7px]" />
            <span className="ml-[7px]">查找</span>
            <Cr c="ml-[3px]" />
            <Sep c="ml-[7px]" />
            <Tb c="ml-[7px]" g ic={<IUp />} t="上移" />
            <Tb c="ml-[9px]" g ic={<IDown />} t="下移" />
          </div>
          <div className="flex-1 flex mt-[1px] min-h-0">
            <MiddlePanel />
            <div className="ml-[5px] w-[1018px] shrink-0 flex flex-col">
              <div className="h-[20px] shrink-0 flex items-end bg-white">
                <div className="w-[62px] h-[20px] -mb-px relative border-x border-t border-[#8a8a8a] bg-white rounded-t-[2px] flex items-center justify-center text-[13px] leading-none">属性编辑</div>
              </div>
              <div className="flex-1 border-t border-l border-r border-[#8a8a8a] bg-white min-h-0 flex flex-col">
                <div className="mt-[3px] ml-[2px] mr-[2px] flex-1 mb-[2px] border border-[#a5a5a5] flex items-start overflow-hidden min-h-0">
                  <div className="w-[371px] shrink-0 flex flex-col mt-[1px]">
                    <div className="flex h-[22px] shrink-0 text-[12px] leading-none">
                      <div className={`${num} ${hdrBg}`} />
                      <div className={`${cell} w-[191px] justify-center pt-[2px] ${hdrBg}`}>属性名称</div>
                      <div className={`${cell} w-[127px] justify-center pt-[2px] ${hotBg}`}>属性值</div>
                      <div className={`${cell} w-[31px] justify-center pt-[2px] ${hdrBg}`}>附加</div>
                    </div>
                    {rows.map((r) => <Row key={r.n} r={r} />)}
                  </div>
                  <div className="ml-[352px] w-[271px] h-[300px] border-x border-t border-[#666] bg-[linear-gradient(#b9c9da,#dde8f5_16%)] flex flex-col shrink-0">
                    <div className="h-[27px] shrink-0 flex items-center pl-[7px] pt-[6px] text-[12px] leading-none text-[#5a5a5a]">箍筋图</div>
                    <div className="ml-[7px] w-[254px] border-t border-l border-white shrink-0"><StirrupCanvas /></div>
                  </div>
                </div>
              </div>
            </div>
          </div>
        </div>
      </div>

      <Dialog />

      {/* overlays */}
      <div className="absolute left-[623px] top-[645px] text-[27px] leading-[36px] font-bold whitespace-nowrap text-[#ecdc2a] font-['Noto_Sans_CJK_TC',sans-serif] [-webkit-text-stroke:0.6px_#333] [text-shadow:0_0_2px_#000,1px_1px_2px_#000]">曲：飛鳥凉</div>
      <div className="absolute left-[1336px] top-[620px] w-[42px] h-[42px] rounded-full border-[2px] border-[#7fb98a] bg-[radial-gradient(circle_at_50%_35%,#63d86f,#18a92e)] flex items-center pl-[5px] text-white font-bold text-[12px]">64</div>
      <div className="absolute left-[1192px] top-[686px] w-[79px] h-[18px] bg-[linear-gradient(#6a6f74,#2e3236)] flex items-start pt-[2px] pl-[5px]">
        <svg viewBox="0 0 9 9" className="w-[9px] h-[9px] mt-[1px]"><path d="M1 1h1M4 1h1M7 1h1M1 4h1M4 4h1M7 4h1M1 7h1M4 7h1M7 7h1" stroke="#ddd" /></svg>
        <svg viewBox="0 0 14 14" className="w-[14px] h-[14px] ml-[9px]"><rect x="0" y="3" width="14" height="11" fill="#ddd" stroke="#888" /><path d="M2 6h10M2 8.5h10M2 11h10" stroke="#888" strokeDasharray="1 1" /></svg>
        <span className="ml-[9px] w-[15px] h-[15px] rounded-full bg-[#1c3fb0] border border-white text-white font-bold text-[10px] leading-[13px] text-center">?</span>
        <span className="ml-[12px] mt-[3px] w-[5px] h-[2px] bg-white" />
      </div>
    </div>
  );
}
